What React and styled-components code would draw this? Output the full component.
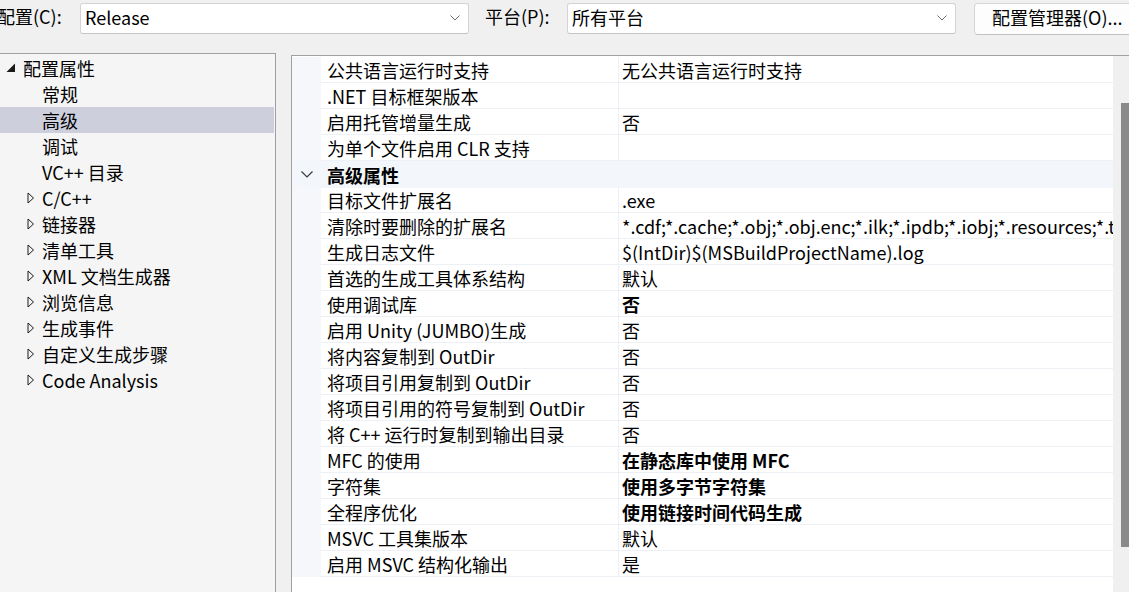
import styled, { createGlobalStyle } from "styled-components";

const GlobalStyle = createGlobalStyle`
  html, body {
    margin: 0;
    padding: 0;
    background: #f0f0f0;
  }
  body {
    font-family: "Noto Sans CJK SC", "Noto Sans", sans-serif;
    font-size: 18px;
    color: #000;
    overflow: hidden;
  }
  * { box-sizing: border-box; }
`;

const Page = styled.div`
  width: 1129px;
  height: 592px;
  display: flex;
  flex-direction: column;
  overflow: hidden;
`;

const Toolbar = styled.div`
  height: 53px;
  flex: none;
  display: flex;
  align-items: flex-start;
  padding-top: 3px;
`;

const Label = styled.span`
  flex: none;
  width: ${(p) => p.$width}px;
  margin-left: ${(p) => p.$offset || 0}px;
  padding-left: ${(p) => p.$pad || 0}px;
  height: 31px;
  line-height: 27px;
  white-space: nowrap;
`;

const Combo = styled.div`
  flex: none;
  width: ${(p) => p.$width}px;
  height: 31px;
  background: #fff;
  border: 1px solid #d4d4d4;
  border-bottom-color: #c4c4c4;
  border-radius: 3px;
  display: flex;
  align-items: center;
  justify-content: space-between;
  padding: 0 8px 2px 4px;
  line-height: 25px;
`;

const Button = styled.div`
  flex: none;
  margin-left: 18px;
  width: 180px;
  height: 32px;
  background: #fdfdfd;
  border: 1px solid #d6d6d6;
  border-bottom-color: #c2c2c2;
  border-radius: 4px;
  padding-left: 17px;
  line-height: 27px;
  white-space: nowrap;
`;

const Main = styled.div`
  flex: 1;
  display: flex;
  min-height: 0;
`;

const TreePanel = styled.div`
  flex: none;
  width: 276px;
  background: #f5f5f5;
  border-top: 1px solid #a0a0a0;
  border-right: 1px solid #a0a0a0;
  padding-top: 1px;
`;

const TreeRow = styled.div`
  height: 26px;
  margin-right: 1px;
  display: flex;
  align-items: center;
  padding-left: ${(p) => p.$indent}px;
  background: ${(p) => (p.$selected ? "#cdcfdc" : "transparent")};
  white-space: nowrap;
`;

const Toggle = styled.span`
  flex: none;
  width: ${(p) => p.$width}px;
  display: flex;
  align-items: center;
`;

const GridPanel = styled.div`
  flex: 1;
  margin-left: 15px;
  margin-top: 2px;
  background: #fff;
  border-top: 1px solid #a0a0a0;
  border-left: 1px solid #a0a0a0;
  display: flex;
  min-width: 0;
`;

const Rows = styled.div`
  flex: 1;
  min-width: 0;
  overflow: hidden;
`;

const Row = styled.div`
  display: grid;
  grid-template-columns: 29px 298px 1fr;
  height: 26px;
`;

const Gutter = styled.div`
  background: ${(p) => (p.$header ? "#f3f6fb" : "#f5f7fb")};
  display: flex;
  align-items: center;
  justify-content: center;
  padding-left: 1px;
`;

const NameCell = styled.div`
  padding: 1px 0 0 6px;
  border-bottom: 1px solid #edf0f5;
  border-right: 1px solid #edf0f5;
  line-height: 25px;
  white-space: nowrap;
  overflow: hidden;
`;

const ValueCell = styled.div`
  padding: 1px 0 0 3px;
  border-bottom: 1px solid #edf0f5;
  line-height: 25px;
  white-space: nowrap;
  overflow: hidden;
  font-weight: ${(p) => (p.$bold ? 700 : 400)};
`;

const HeaderCell = styled.div`
  grid-column: 2 / 4;
  background: #f3f6fb;
  padding: 1px 0 0 6px;
  line-height: 26px;
  font-weight: 700;
`;

const Filler = styled.div`
  height: 1px;
  background: #fff;
`;

const Scrollbar = styled.div`
  flex: none;
  width: 16px;
  background: #f0f0f0;
`;

const Thumb = styled.div`
  margin-top: 47px;
  margin-left: 8px;
  width: 8px;
  height: 444px;
  background: #8a8a8a;
`;

const ComboChevron = () => (
  <svg width="10" height="6" viewBox="0 0 10 6">
    <polyline points="0.5,0.5 5,5 9.5,0.5" fill="none" stroke="#707070" strokeWidth="1" />
  </svg>
);

const Expanded = () => (
  <svg width="10" height="10" viewBox="0 0 10 10">
    <polygon points="9,0.5 9,9 0.5,9" fill="#1a1a1a" />
  </svg>
);

const Collapsed = () => (
  <svg width="8" height="12" viewBox="0 0 8 12">
    <polygon points="1,1 6.5,6 1,11" fill="none" stroke="#1a1a1a" strokeWidth="1" />
  </svg>
);

const GroupChevron = () => (
  <svg width="12" height="7" viewBox="0 0 12 7">
    <polyline points="0.5,0.5 6,6 11.5,0.5" fill="none" stroke="#3a3a3a" strokeWidth="1.2" />
  </svg>
);

const tree = [
  { label: "配置属性", level: 0, open: true },
  { label: "常规", level: 1 },
  { label: "高级", level: 1, selected: true },
  { label: "调试", level: 1 },
  { label: "VC++ 目录", level: 1 },
  { label: "C/C++", level: 1, closed: true },
  { label: "链接器", level: 1, closed: true },
  { label: "清单工具", level: 1, closed: true },
  { label: "XML 文档生成器", level: 1, closed: true },
  { label: "浏览信息", level: 1, closed: true },
  { label: "生成事件", level: 1, closed: true },
  { label: "自定义生成步骤", level: 1, closed: true },
  { label: "Code Analysis", level: 1, closed: true },
];

const props1 = [
  ["公共语言运行时支持", "无公共语言运行时支持"],
  [".NET 目标框架版本", ""],
  ["启用托管增量生成", "否"],
  ["为单个文件启用 CLR 支持", ""],
];

const props2 = [
  ["目标文件扩展名", ".exe"],
  [
    "清除时要删除的扩展名",
    "*.cdf;*.cache;*.obj;*.obj.enc;*.ilk;*.ipdb;*.iobj;*.resources;*.tlb;*.tli;*.tlh;*.tmp;*.rsp;*.pgc;*.pgd;*.meta;*.tlog",
  ],
  ["生成日志文件", "$(IntDir)$(MSBuildProjectName).log"],
  ["首选的生成工具体系结构", "默认"],
  ["使用调试库", "否", true],
  ["启用 Unity (JUMBO)生成", "否"],
  ["将内容复制到 OutDir", "否"],
  ["将项目引用复制到 OutDir", "否"],
  ["将项目引用的符号复制到 OutDir", "否"],
  ["将 C++ 运行时复制到输出目录", "否"],
  ["MFC 的使用", "在静态库中使用 MFC", true],
  ["字符集", "使用多字节字符集", true],
  ["全程序优化", "使用链接时间代码生成", true],
  ["MSVC 工具集版本", "默认"],
  ["启用 MSVC 结构化输出", "是"],
];

const PropRow = ({ name, value, bold }) => (
  <Row>
    <Gutter />
    <NameCell>{name}</NameCell>
    <ValueCell $bold={bold}>{value}</ValueCell>
  </Row>
);

export default function App() {
  return (
    <Page>
      <GlobalStyle />
      <Toolbar>
        <Label $width={83} $offset={-3}>配置(C):</Label>
        <Combo $width={389}>
          <span>Release</span>
          <ComboChevron />
        </Combo>
        <Label $width={98} $pad={16}>平台(P):</Label>
        <Combo $width={389}>
          <span>所有平台</span>
          <ComboChevron />
        </Combo>
        <Button>配置管理器(O)...</Button>
      </Toolbar>
      <Main>
        <TreePanel>
          {tree.map((t) => (
            <TreeRow
              key={t.label}
              $indent={t.level === 0 ? 6 : t.closed ? 27 : 42}
              $selected={t.selected}
            >
              {t.open && (
                <Toggle $width={17}>
                  <Expanded />
                </Toggle>
              )}
              {t.closed && (
                <Toggle $width={15}>
                  <Collapsed />
                </Toggle>
              )}
              {t.label}
            </TreeRow>
          ))}
        </TreePanel>
        <GridPanel>
          <Rows>
            <Filler />
            {props1.map(([n, v, b]) => (
              <PropRow key={n} name={n} value={v} bold={b} />
            ))}
            <Row>
              <Gutter $header>
                <GroupChevron />
              </Gutter>
              <HeaderCell>高级属性</HeaderCell>
            </Row>
            {props2.map(([n, v, b]) => (
              <PropRow key={n} name={n} value={v} bold={b} />
            ))}
          </Rows>
          <Scrollbar>
            <Thumb />
          </Scrollbar>
        </GridPanel>
      </Main>
    </Page>
  );
}
